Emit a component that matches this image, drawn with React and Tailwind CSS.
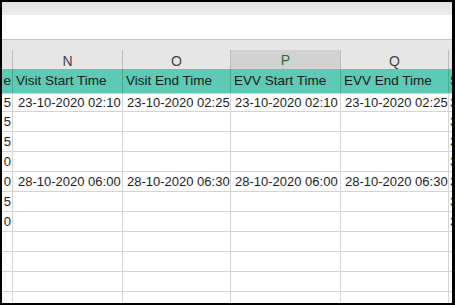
import React from "react";

const font = { fontFamily: '"Liberation Sans", Arial, sans-serif' };

const rows = [
  { l: "5", n: "23-10-2020 02:10", o: "23-10-2020 02:25", p: "23-10-2020 02:10", q: "23-10-2020 02:25", r: "3" },
  { l: "5", r: "3" },
  { l: "5", r: "3" },
  { l: "0", r: "3" },
  { l: "0", n: "28-10-2020 06:00", o: "28-10-2020 06:30", p: "28-10-2020 06:00", q: "28-10-2020 06:30", r: "3" },
  { l: "5", r: "3" },
  { l: "0", r: "3" },
  {},
  {},
  {},
  {},
];

function Row({ r, first }) {
  const h = first ? "h-[18px]" : "h-[20px]";
  const cell = "border-r border-[#d4d4d4] overflow-hidden whitespace-nowrap flex items-center";
  return (
    <div className={`flex shrink-0 border-b border-[#d4d4d4] text-[13px] text-[#1e1e1e] ${h}`}>
      <div className={`${cell} w-[11px] justify-end pr-[1px]`}>{r.l || ""}</div>
      <div className={`${cell} w-[110px] pl-[5px]`}>{r.n || ""}</div>
      <div className={`${cell} w-[108px] pl-[4px]`}>{r.o || ""}</div>
      <div className={`${cell} w-[110px] pl-[4px]`}>{r.p || ""}</div>
      <div className={`${cell} w-[108px] pl-[4px]`}>{r.q || ""}</div>
      <div className="flex-1 overflow-hidden whitespace-nowrap flex items-center pl-[1px]">{r.r || ""}</div>
    </div>
  );
}

export default function App() {
  const colHead = "border-r border-[#bdbdbd] flex items-center justify-center text-[14px]";
  const teal = "border-r border-[#48a894] flex items-center overflow-hidden whitespace-nowrap";
  return (
    <div className="w-[455px] h-[305px] bg-black pt-[2px] pl-[2px] pr-[3px] pb-[2px]" style={font}>
      <div className="w-full h-full flex flex-col overflow-hidden bg-white">
        {/* top band */}
        <div className="h-[13px] shrink-0 bg-gradient-to-b from-[#e2e2e2] to-[#ececec]" />
        {/* formula area */}
        <div className="h-[25px] shrink-0 bg-white border-b border-[#c6c6c6]" />
        {/* column header area */}
        <div className="h-[29px] shrink-0 bg-[#e6e6e6] flex flex-col">
          <div className="h-[10px] shrink-0" />
          <div className="flex flex-1 text-[#444]">
            <div className={`${colHead} w-[11px]`} />
            <div className={`${colHead} w-[110px]`}>N</div>
            <div className={`${colHead} w-[108px]`}>O</div>
            <div className={`${colHead} w-[110px] bg-[#d2d2d2] text-[#217346] border-b-2 border-b-[#217346]`}>P</div>
            <div className={`${colHead} w-[108px]`}>Q</div>
            <div className="flex-1" />
          </div>
        </div>
        {/* teal header row */}
        <div className="h-[25px] shrink-0 flex bg-[#5ccab4] text-[13.5px] text-[#1a1a1a] border-b border-[#d4d4d4]">
          <div className={`${teal} w-[11px] justify-end pr-[1px]`}>e</div>
          <div className={`${teal} w-[110px] pl-[3px]`}>Visit Start Time</div>
          <div className={`${teal} w-[108px] pl-[3px]`}>Visit End Time</div>
          <div className={`${teal} w-[110px] pl-[3px]`}>EVV Start Time</div>
          <div className={`${teal} w-[108px] pl-[3px]`}>EVV End Time</div>
          <div className="flex-1 flex items-center overflow-hidden pl-[1px]">S</div>
        </div>
        {rows.map((r, i) => (
          <Row key={i} r={r} first={i === 0} />
        ))}
      </div>
    </div>
  );
}
